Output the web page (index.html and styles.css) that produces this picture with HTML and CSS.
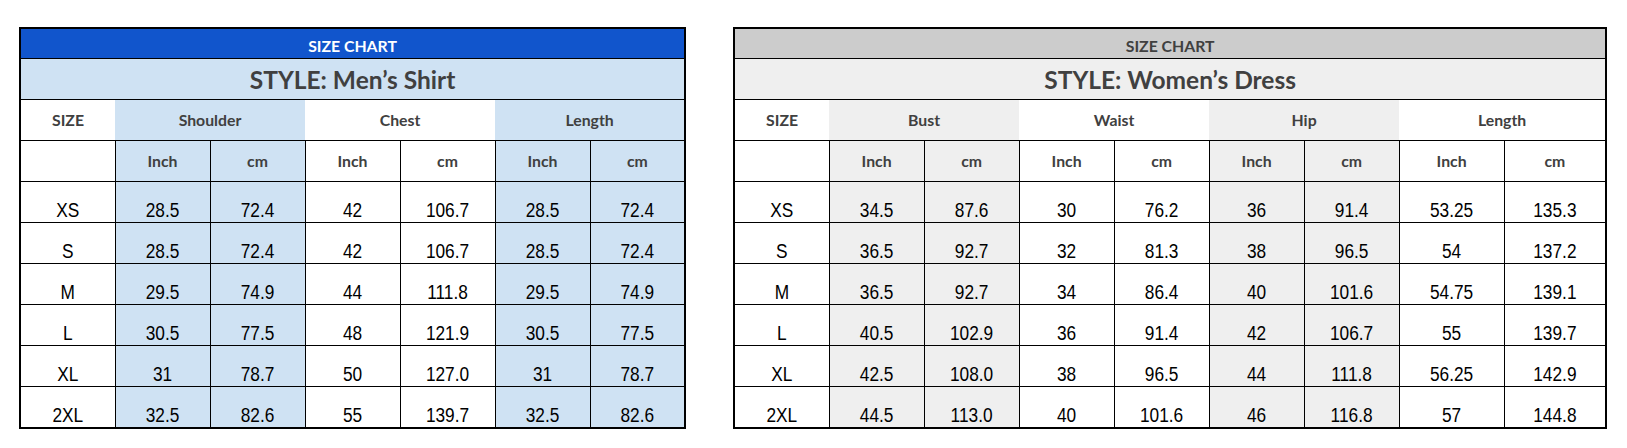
FILE: index.html
```html
<!DOCTYPE html>
<html lang="en">
<head>
<meta charset="utf-8">
<title>Size Charts</title>
<link rel="stylesheet" href="styles.css">
</head>
<body>
<main class="page">
  <table class="chart chart-men">
    <colgroup>
      <col class="c"><col class="c"><col class="c"><col class="c"><col class="c"><col class="c"><col class="c">
    </colgroup>
    <tr class="r-top"><th colspan="7" class="banner banner-blue">SIZE CHART</th></tr>
    <tr class="r-style"><th colspan="7" class="style style-blue">STYLE: Men’s Shirt</th></tr>
    <tr class="r-head">
      <th class="grp">SIZE</th>
      <th colspan="2" class="grp blue">Shoulder</th>
      <th colspan="2" class="grp">Chest</th>
      <th colspan="2" class="grp blue">Length</th>
    </tr>
    <tr class="r-unit">
      <th class="unit"></th>
      <th class="unit blue">Inch</th><th class="unit blue">cm</th>
      <th class="unit">Inch</th><th class="unit">cm</th>
      <th class="unit blue">Inch</th><th class="unit blue">cm</th>
    </tr>
    <tr class="r-data"><td><span class="v">XS</span></td><td class="blue"><span class="v">28.5</span></td><td class="blue"><span class="v">72.4</span></td><td><span class="v">42</span></td><td><span class="v">106.7</span></td><td class="blue"><span class="v">28.5</span></td><td class="blue"><span class="v">72.4</span></td></tr>
    <tr class="r-data"><td><span class="v">S</span></td><td class="blue"><span class="v">28.5</span></td><td class="blue"><span class="v">72.4</span></td><td><span class="v">42</span></td><td><span class="v">106.7</span></td><td class="blue"><span class="v">28.5</span></td><td class="blue"><span class="v">72.4</span></td></tr>
    <tr class="r-data"><td><span class="v">M</span></td><td class="blue"><span class="v">29.5</span></td><td class="blue"><span class="v">74.9</span></td><td><span class="v">44</span></td><td><span class="v">111.8</span></td><td class="blue"><span class="v">29.5</span></td><td class="blue"><span class="v">74.9</span></td></tr>
    <tr class="r-data"><td><span class="v">L</span></td><td class="blue"><span class="v">30.5</span></td><td class="blue"><span class="v">77.5</span></td><td><span class="v">48</span></td><td><span class="v">121.9</span></td><td class="blue"><span class="v">30.5</span></td><td class="blue"><span class="v">77.5</span></td></tr>
    <tr class="r-data"><td><span class="v">XL</span></td><td class="blue"><span class="v">31</span></td><td class="blue"><span class="v">78.7</span></td><td><span class="v">50</span></td><td><span class="v">127.0</span></td><td class="blue"><span class="v">31</span></td><td class="blue"><span class="v">78.7</span></td></tr>
    <tr class="r-data"><td><span class="v">2XL</span></td><td class="blue"><span class="v">32.5</span></td><td class="blue"><span class="v">82.6</span></td><td><span class="v">55</span></td><td><span class="v">139.7</span></td><td class="blue"><span class="v">32.5</span></td><td class="blue"><span class="v">82.6</span></td></tr>
  </table>

  <table class="chart chart-women">
    <colgroup>
      <col class="c"><col class="c"><col class="c"><col class="c"><col class="c"><col class="c"><col class="c"><col class="c-l1"><col class="c-l2">
    </colgroup>
    <tr class="r-top"><th colspan="9" class="banner banner-grey">SIZE CHART</th></tr>
    <tr class="r-style"><th colspan="9" class="style style-grey">STYLE: Women’s Dress</th></tr>
    <tr class="r-head">
      <th class="grp">SIZE</th>
      <th colspan="2" class="grp grey">Bust</th>
      <th colspan="2" class="grp">Waist</th>
      <th colspan="2" class="grp grey">Hip</th>
      <th colspan="2" class="grp">Length</th>
    </tr>
    <tr class="r-unit">
      <th class="unit"></th>
      <th class="unit grey">Inch</th><th class="unit grey">cm</th>
      <th class="unit">Inch</th><th class="unit">cm</th>
      <th class="unit grey">Inch</th><th class="unit grey">cm</th>
      <th class="unit">Inch</th><th class="unit">cm</th>
    </tr>
    <tr class="r-data"><td><span class="v">XS</span></td><td class="grey"><span class="v">34.5</span></td><td class="grey"><span class="v">87.6</span></td><td><span class="v">30</span></td><td><span class="v">76.2</span></td><td class="grey"><span class="v">36</span></td><td class="grey"><span class="v">91.4</span></td><td><span class="v">53.25</span></td><td><span class="v">135.3</span></td></tr>
    <tr class="r-data"><td><span class="v">S</span></td><td class="grey"><span class="v">36.5</span></td><td class="grey"><span class="v">92.7</span></td><td><span class="v">32</span></td><td><span class="v">81.3</span></td><td class="grey"><span class="v">38</span></td><td class="grey"><span class="v">96.5</span></td><td><span class="v">54</span></td><td><span class="v">137.2</span></td></tr>
    <tr class="r-data"><td><span class="v">M</span></td><td class="grey"><span class="v">36.5</span></td><td class="grey"><span class="v">92.7</span></td><td><span class="v">34</span></td><td><span class="v">86.4</span></td><td class="grey"><span class="v">40</span></td><td class="grey"><span class="v">101.6</span></td><td><span class="v">54.75</span></td><td><span class="v">139.1</span></td></tr>
    <tr class="r-data"><td><span class="v">L</span></td><td class="grey"><span class="v">40.5</span></td><td class="grey"><span class="v">102.9</span></td><td><span class="v">36</span></td><td><span class="v">91.4</span></td><td class="grey"><span class="v">42</span></td><td class="grey"><span class="v">106.7</span></td><td><span class="v">55</span></td><td><span class="v">139.7</span></td></tr>
    <tr class="r-data"><td><span class="v">XL</span></td><td class="grey"><span class="v">42.5</span></td><td class="grey"><span class="v">108.0</span></td><td><span class="v">38</span></td><td><span class="v">96.5</span></td><td class="grey"><span class="v">44</span></td><td class="grey"><span class="v">111.8</span></td><td><span class="v">56.25</span></td><td><span class="v">142.9</span></td></tr>
    <tr class="r-data"><td><span class="v">2XL</span></td><td class="grey"><span class="v">44.5</span></td><td class="grey"><span class="v">113.0</span></td><td><span class="v">40</span></td><td><span class="v">101.6</span></td><td class="grey"><span class="v">46</span></td><td class="grey"><span class="v">116.8</span></td><td><span class="v">57</span></td><td><span class="v">144.8</span></td></tr>
  </table>
</main>
</body>
</html>
```

FILE: styles.css
```css
html, body {
  margin: 0;
  padding: 0;
  background: #ffffff;
}

.page {
  display: flex;
  align-items: flex-start;
  gap: 47px;
  padding: 27px 0 0 19px;
}

.chart {
  border-collapse: collapse;
  table-layout: fixed;
  border: 2px solid #000;
}

.chart-men { width: 666px; }
.chart-women { width: 874px; }

.c { width: 95px; }
.c-l1 { width: 105px; }
.c-l2 { width: 102px; }

.chart th,
.chart td {
  border: 1px solid #000;
  padding: 0;
  text-align: center;
  overflow: hidden;
  white-space: nowrap;
}

.chart th {
  font-family: Lato, "Open Sans", "Liberation Sans", sans-serif;
  font-weight: 700;
  color: #404040;
  font-size: 15.8px;
  vertical-align: middle;
  line-height: 1.2;
}

.r-top th { height: 25px; }
.r-style th { height: 38px; }
.r-head th { height: 40px; }
.r-unit th { height: 40px; }
.r-data td { height: 38px; }

.banner {
  vertical-align: bottom !important;
  padding-bottom: 4px !important;
  line-height: 1 !important;
}

.banner-blue {
  background: #1155cc;
  color: #ffffff !important;
}

.banner-grey {
  background: #cccccc;
}

.style {
  font-size: 24.5px !important;
  padding-top: 2px !important;
}

.style-blue { background: #cfe2f3; }
.style-grey { background: #efefef; }

.r-head .grp {
  border-left: none;
  border-right: none;
}

.blue { background: #cfe2f3; }
.grey { background: #efefef; }

.chart td {
  font-family: "Liberation Sans", Arial, sans-serif;
  font-size: 17.3px;
  color: #000;
  vertical-align: bottom;
  padding-bottom: 2px;
  line-height: 1;
}

.v {
  display: inline-block;
  transform: scaleY(1.15);
  transform-origin: 50% 100%;
}
```
